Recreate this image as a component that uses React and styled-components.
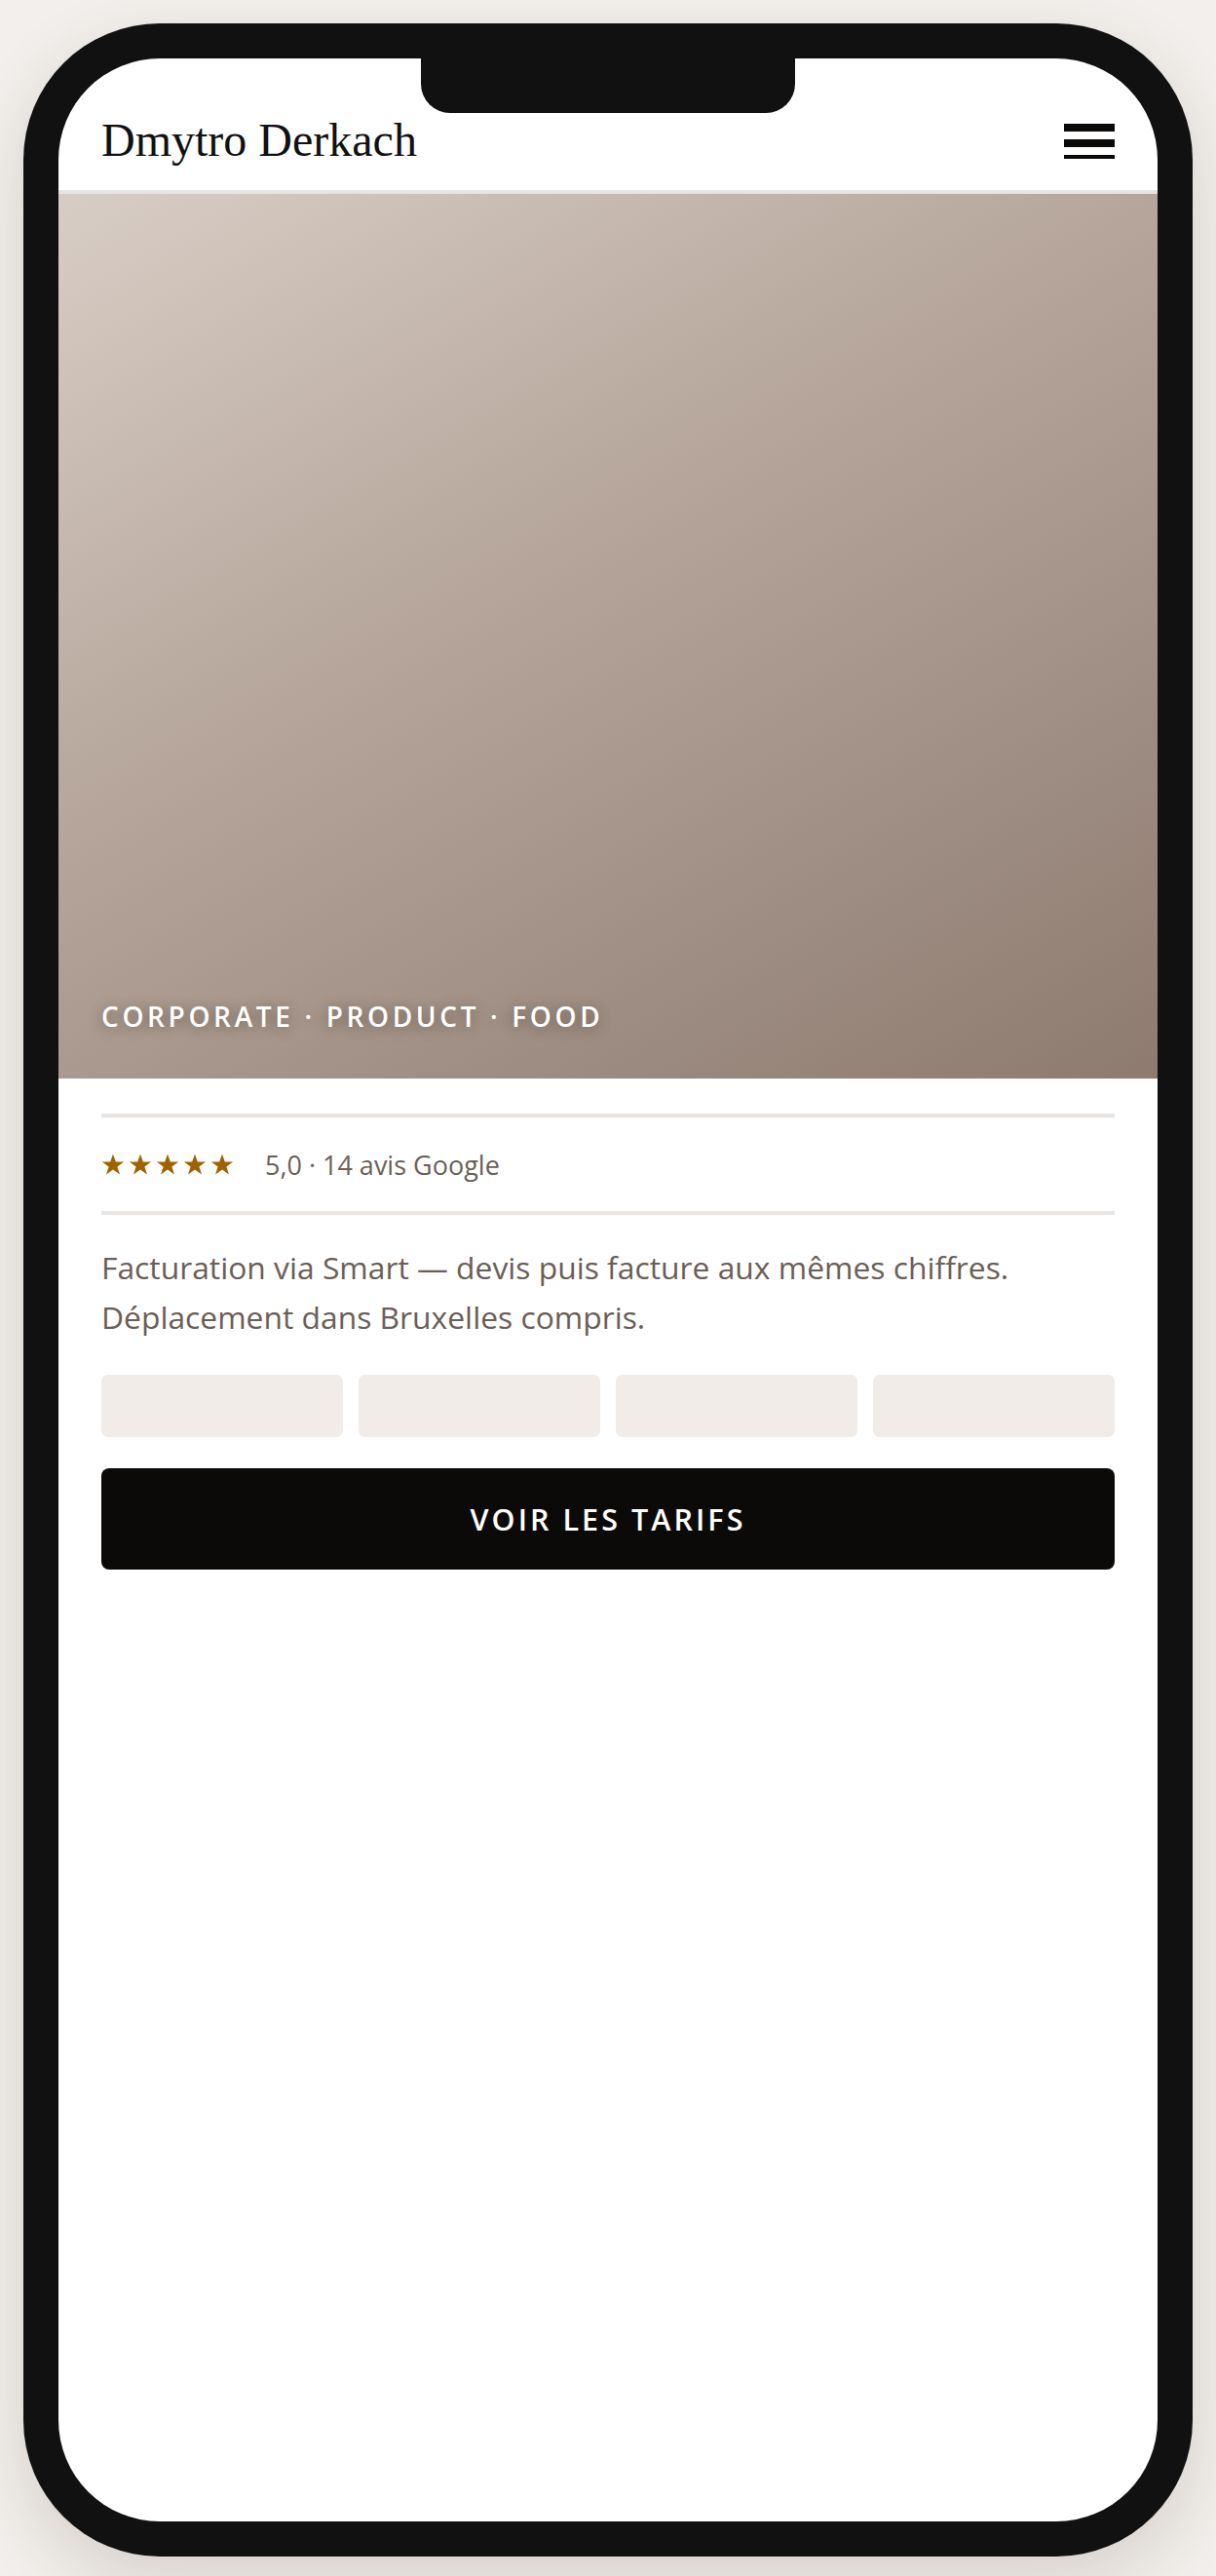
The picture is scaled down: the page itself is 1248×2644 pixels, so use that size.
import React from 'react'
import styled, {createGlobalStyle} from 'styled-components'

const GlobalStyle = createGlobalStyle`
	* {
		box-sizing: border-box;
	}
	body {
		margin: 0;
		background: #f2efec;
		font-family: "Open Sans", "Liberation Sans", sans-serif;
	}
`

const Stage = styled.div`
	padding: 24px;
	display: flex;
	justify-content: center;
`

const Phone = styled.div`
	width: 1200px;
	height: 2600px;
	background: #111111;
	border-radius: 140px;
	padding: 36px;
	box-shadow: 0 24px 70px rgba(70, 50, 40, 0.16);
`

const Screen = styled.div`
	position: relative;
	height: 100%;
	background: #fff;
	border-radius: 104px;
	overflow: hidden;
`

const Notch = styled.div`
	position: absolute;
	top: 0;
	left: 50%;
	transform: translateX(-50%);
	width: 384px;
	height: 56px;
	background: #111111;
	border-radius: 0 0 30px 30px;
`

const Header = styled.header`
	height: 139px;
	padding: 32px 44px 0 44px;
	display: flex;
	align-items: center;
	justify-content: space-between;
	border-bottom: 4px solid #e8e4e1;
`

const Brand = styled.div`
	font-family: "Liberation Serif", "DejaVu Serif", serif;
	font-size: 48px;
	color: #111;
`

const Burger = styled.div`
	width: 52px;
	height: 36px;
	display: flex;
	flex-direction: column;
	gap: 8px;
	margin-top: 2px;

	span {
		display: block;
		height: 8px;
		background: #0c0a08;
	}

	span:last-child {
		height: 4px;
	}
`

const Hero = styled.div`
	height: 908px;
	background: linear-gradient(150deg, #d8cdc5 0%, #b3a398 45%, #8d7b70 100%);
	display: flex;
	flex-direction: column;
	justify-content: flex-end;
	padding: 0 44px 45px 44px;
`

const Tags = styled.div`
	color: #fff;
	font-size: 28px;
	font-weight: 600;
	letter-spacing: 0.13em;
	text-shadow: 0 2px 14px rgba(40, 25, 15, 0.45);
`

const Body = styled.div`
	padding: 36px 44px;
`

const Divider = styled.div`
	height: 4px;
	background: #e8e4e1;
`

const Rating = styled.div`
	height: 96px;
	display: flex;
	align-items: center;
	gap: 32px;
`

const Stars = styled.div`
	display: flex;
	gap: 4px;

	svg {
		width: 24px;
		height: 23px;
		fill: #a06200;
	}
`

const RatingText = styled.div`
	font-size: 27px;
	color: #6b5f58;
`

const Text = styled.p`
	margin: 28px 0 0 0;
	font-size: 31.8px;
	line-height: 51px;
	color: #6b5e57;
`

const Chips = styled.div`
	margin-top: 34px;
	display: grid;
	grid-template-columns: repeat(4, 1fr);
	gap: 16px;
`

const Chip = styled.div`
	height: 64px;
	background: #f1ece8;
	border-radius: 7px;
`

const Cta = styled.button`
	display: block;
	width: 100%;
	height: 104px;
	margin-top: 32px;
	border: none;
	border-radius: 8px;
	background: #0c0a08;
	color: #fff;
	font-family: "Open Sans", "Liberation Sans", sans-serif;
	font-size: 30.5px;
	font-weight: 600;
	letter-spacing: 0.1em;
	cursor: pointer;
`

const Star = () => (
	<svg viewBox="0 0 24 23">
		<path d="M12 0.5l2.8 7.9h8.4l-6.8 5 2.6 8.1L12 16.5l-7 5 2.6-8.1-6.8-5h8.4z" />
	</svg>
)

const App = () => {
	return (
		<>
			<GlobalStyle />
			<Stage>
				<Phone>
					<Screen>
						<Notch />
						<Header>
							<Brand>Dmytro Derkach</Brand>
							<Burger>
								<span />
								<span />
								<span />
							</Burger>
						</Header>
						<Hero>
							<Tags>CORPORATE · PRODUCT · FOOD</Tags>
						</Hero>
						<Body>
							<Divider />
							<Rating>
								<Stars>
									{[1, 2, 3, 4, 5].map(n => <Star key={n} />)}
								</Stars>
								<RatingText>5,0 · 14 avis Google</RatingText>
							</Rating>
							<Divider />
							<Text>
								Facturation via Smart — devis puis facture aux mêmes chiffres.
								<br />
								Déplacement dans Bruxelles compris.
							</Text>
							<Chips>
								<Chip />
								<Chip />
								<Chip />
								<Chip />
							</Chips>
							<Cta>VOIR LES TARIFS</Cta>
						</Body>
					</Screen>
				</Phone>
			</Stage>
		</>
	)
}

export default App
